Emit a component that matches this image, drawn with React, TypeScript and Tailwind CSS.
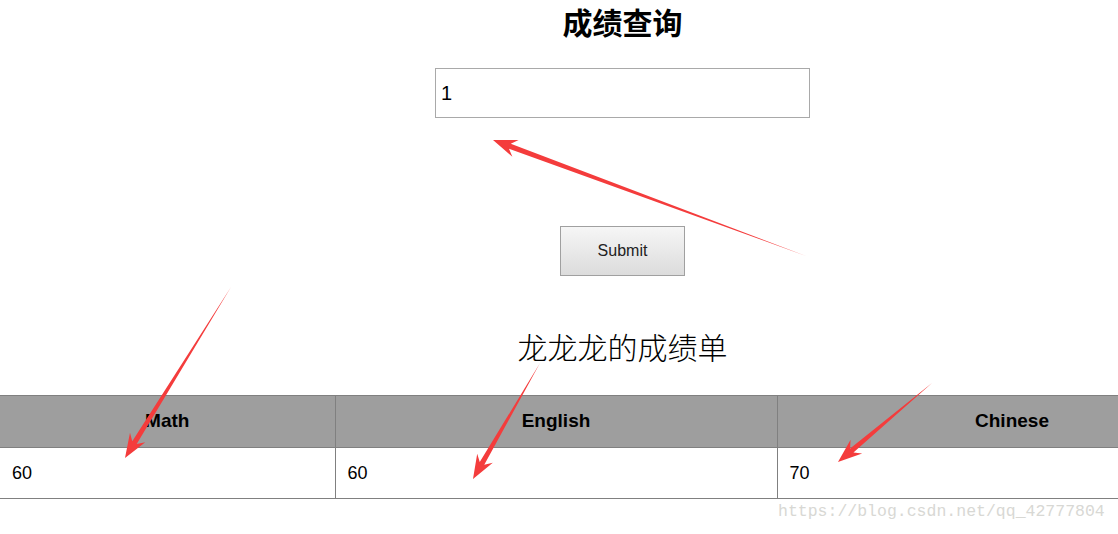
const arrows = [
  { from: [806, 256], to: [493, 140] },
  { from: [231, 287], to: [125, 458] },
  { from: [540, 363], to: [473, 479] },
  { from: [932, 383], to: [838, 462] },
];

function arrowPoints(from: number[], to: number[]) {
  const [x1, y1] = from;
  const [x2, y2] = to;
  const len = Math.hypot(x2 - x1, y2 - y1);
  const ux = (x2 - x1) / len;
  const uy = (y2 - y1) / len;
  const px = -uy;
  const py = ux;
  const headLen = 24;
  const headHalf = 9;
  const shaftHalf = 2.6;
  const bx = x2 - ux * headLen;
  const by = y2 - uy * headLen;
  const nx = x2 - ux * (headLen - 6);
  const ny = y2 - uy * (headLen - 6);
  const pts = [
    [x1, y1],
    [nx + px * shaftHalf, ny + py * shaftHalf],
    [bx + px * headHalf, by + py * headHalf],
    [x2, y2],
    [bx - px * headHalf, by - py * headHalf],
    [nx - px * shaftHalf, ny - py * shaftHalf],
  ];
  return pts.map((p) => p.join(',')).join(' ');
}

const cols = [
  { name: 'Math', score: '60', w: 'w-[335px]' },
  { name: 'English', score: '60', w: 'w-[442px]' },
  { name: 'Chinese', score: '70', w: 'w-[470px]' },
];

export default function App() {
  return (
    <div className="relative w-[1118px] h-[534px] overflow-hidden bg-white font-['Liberation_Sans','Noto_Sans_CJK_SC',sans-serif] text-black">
      {/* page is wider than the window, content centres on ~1245px */}
      <div className="w-[1245px]">
        <div className="flex flex-col items-center pt-[5px]">
          <h1 className="text-[30px] leading-[38px] font-bold">成绩查询</h1>
          <input
            defaultValue="1"
            className="mt-[25px] w-[375px] h-[50px] border border-[#a9a9a9] px-[5px] text-[20px] outline-none"
          />
          <button className="mt-[108px] w-[125px] h-[50px] border border-[#a0a0a0] bg-gradient-to-b from-[#f6f6f6] to-[#dcdcdc] text-[16px] text-[#222]">
            Submit
          </button>
          <div className="mt-[50px] text-[30px] leading-[40px] font-['Noto_Sans_CJK_SC',sans-serif] font-light">
            龙龙龙的成绩单
          </div>
        </div>

        <table className="mt-[29px] w-[1247px] border-collapse table-fixed">
          <thead>
            <tr>
              {cols.map((c, i) => (
                <th
                  key={c.name}
                  className={`${c.w} h-[52px] bg-[#9e9e9e] border border-[#808080] text-[19px] font-bold ${i === 0 ? 'border-l-0' : ''}`}
                >
                  {c.name}
                </th>
              ))}
            </tr>
          </thead>
          <tbody>
            <tr>
              {cols.map((c, i) => (
                <td
                  key={c.name}
                  className={`h-[51px] border border-[#808080] pl-[12px] text-[18px] ${i === 0 ? 'border-l-0' : ''}`}
                >
                  {c.score}
                </td>
              ))}
            </tr>
          </tbody>
        </table>
      </div>

      <div className="absolute left-[778px] top-[500px] font-['Liberation_Mono','DejaVu_Sans_Mono',monospace] text-[16.5px] text-[#d8d8d4]">
        https://blog.csdn.net/qq_42777804
      </div>

      <svg className="absolute inset-0 pointer-events-none" width="1118" height="534">
        {arrows.map((a, i) => (
          <polygon key={i} points={arrowPoints(a.from, a.to)} fill="#f43c3c" />
        ))}
      </svg>
    </div>
  );
}
